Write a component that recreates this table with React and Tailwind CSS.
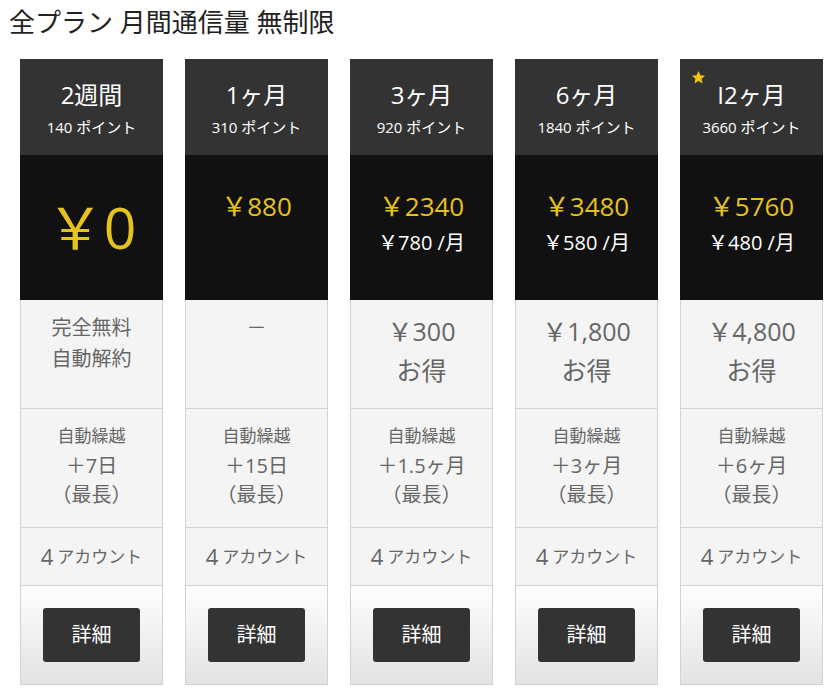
import React from "react";

const FONT = { fontFamily: '"Open Sans", "Noto Sans CJK JP", sans-serif' };

const PLANS = [
  { term: "2週間", points: "140 ポイント", price: "0", free: true, note: ["完全無料", "自動解約"], carry: "＋7日" },
  { term: "1ヶ月", points: "310 ポイント", price: "880", note: ["－"], dash: true, carry: "＋15日" },
  { term: "3ヶ月", points: "920 ポイント", price: "2340", monthly: "780", note: ["￥300", "お得"], carry: "＋1.5ヶ月" },
  { term: "6ヶ月", points: "1840 ポイント", price: "3480", monthly: "580", note: ["￥1,800", "お得"], carry: "＋3ヶ月" },
  { term: "I2ヶ月", points: "3660 ポイント", price: "5760", monthly: "480", note: ["￥4,800", "お得"], carry: "＋6ヶ月", star: true },
];

function Star() {
  return (
    <svg viewBox="0 0 24 24" className="absolute left-[11px] top-[11px] w-[15px] h-[15px]">
      <path d="M12 1.5l3.1 6.9 7.4.7-5.6 5 1.6 7.4L12 17.6l-6.5 3.9 1.6-7.4-5.6-5 7.4-.7z" fill="#f0c419" />
    </svg>
  );
}

function PlanColumn({ plan }) {
  return (
    <div className="w-[143px] flex flex-col">
      <div className="relative h-[96px] bg-[#333333] text-white text-center pt-[18px]">
        {plan.star && <Star />}
        <div className="text-[24px] leading-[36px]">{plan.term}</div>
        <div className="text-[15px] leading-[20px] mt-1">{plan.points}</div>
      </div>

      {plan.free ? (
        <div className="h-[145px] bg-[#111111] flex items-center justify-center text-[#e6c21c] text-[57px] leading-none">
          ￥0
        </div>
      ) : (
        <div className="h-[145px] bg-[#111111] text-center pt-[33px]">
          <div className="text-[#e6c21c] text-[26px] leading-[36px]">￥{plan.price}</div>
          {plan.monthly && (
            <div className="text-white text-[20px] leading-[28px] mt-[5px]">￥{plan.monthly} /月</div>
          )}
        </div>
      )}

      <div className="h-[108px] bg-[#f4f4f4] border-x border-[#d2d2d2] text-center text-[#666666] pt-[12px]">
        {plan.free || plan.dash ? (
          plan.note.map((t) => (
            <div key={t} className="text-[20px] leading-[31px]">{t}</div>
          ))
        ) : (
          plan.note.map((t) => (
            <div key={t} className="text-[25px] leading-[39px]">{t}</div>
          ))
        )}
      </div>

      <div className="h-[119px] bg-[#f4f4f4] border-x border-t border-[#d2d2d2] text-center text-[#666666] pt-[12px]">
        <div className="text-[17px] leading-[30px]">自動繰越</div>
        <div className="text-[20px] leading-[29px]">{plan.carry}</div>
        <div className="text-[20px] leading-[29px]">（最長）</div>
      </div>

      <div className="h-[58px] bg-[#f4f4f4] border-x border-t border-[#d2d2d2] flex items-center justify-center text-[#666666]">
        <span className="text-[22px] mr-[4px]">4</span>
        <span className="text-[17px]">アカウント</span>
      </div>

      <div className="h-[100px] bg-gradient-to-b from-[#fefefe] to-[#e3e3e3] border border-[#d2d2d2] flex items-center justify-center">
        <button className="w-[97px] h-[54px] rounded-[3px] bg-[#333333] text-white text-[20px]">詳細</button>
      </div>
    </div>
  );
}

export default function App() {
  return (
    <div className="w-[833px] h-[690px] bg-white overflow-hidden" style={FONT}>
      <h1 className="pl-[9px] pt-[3px] text-[26px] leading-[38px] text-[#222222]">全プラン 月間通信量 無制限</h1>
      <div className="flex gap-[22px] pl-[20px] mt-[18px]">
        {PLANS.map((p) => (
          <PlanColumn key={p.term} plan={p} />
        ))}
      </div>
    </div>
  );
}
